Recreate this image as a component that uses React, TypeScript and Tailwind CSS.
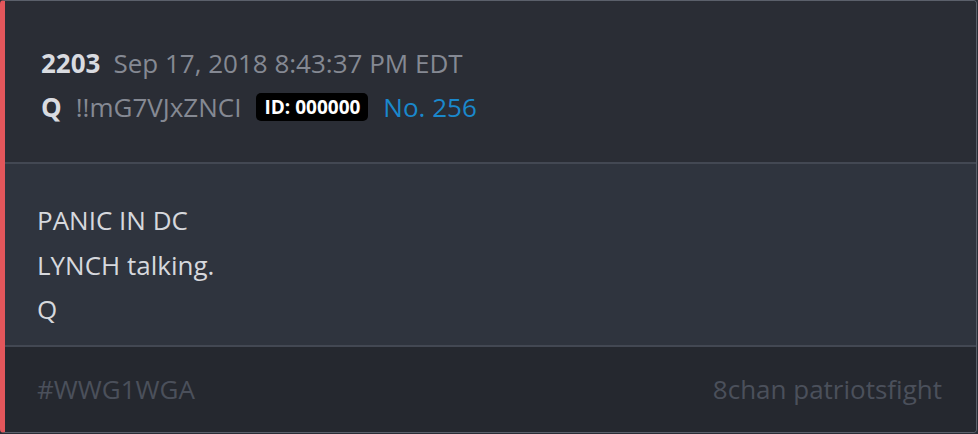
import React from "react";

export default function App() {
  return (
    <div className="w-[978px] h-[434px] bg-[#2a2e36]" style={{ fontFamily: '"Open Sans", sans-serif' }}>
      <div className="w-[977px] h-[433px] rounded-[4px] border border-[#5b606b] border-l-[5px] border-l-[#e3565b] flex flex-col overflow-hidden">
        <div className="h-[161px] bg-[#2a2d35] pl-[36px] pt-[40px] flex flex-col">
          <div className="flex items-center h-[44px] text-[26px]">
            <span className="font-bold text-[#d9dbe0]">2203</span>
            <span className="ml-[13px] text-[#858993]">Sep 17, 2018 8:43:37 PM EDT</span>
          </div>
          <div className="flex items-center h-[44px] text-[26px]">
            <span className="font-bold text-[#d9dbe0]">Q</span>
            <span className="ml-[14px] text-[#858993]">!!mG7VJxZNCI</span>
            <span className="ml-[15px] bg-black text-white font-bold text-[19px] leading-[28px] px-[8px] rounded-[5px]">ID: 000000</span>
            <span className="ml-[15px] text-[#1a88cc]">No. 256</span>
          </div>
        </div>
        <div className="h-[2px] bg-[#434853]" />
        <div className="h-[181px] bg-[#2f343e] pl-[32px] pt-[34px] text-[26px] leading-[44.5px] text-[#d6d8dd]">
          <div>PANIC IN DC</div>
          <div>LYNCH talking.</div>
          <div>Q</div>
        </div>
        <div className="h-[2px] bg-[#434853]" />
        <div className="flex-1 bg-[#25282f] pl-[32px] pr-[34px] flex items-center justify-between text-[26px] text-[#4b505b]">
          <span>#WWG1WGA</span>
          <span>8chan patriotsfight</span>
        </div>
      </div>
    </div>
  );
}
